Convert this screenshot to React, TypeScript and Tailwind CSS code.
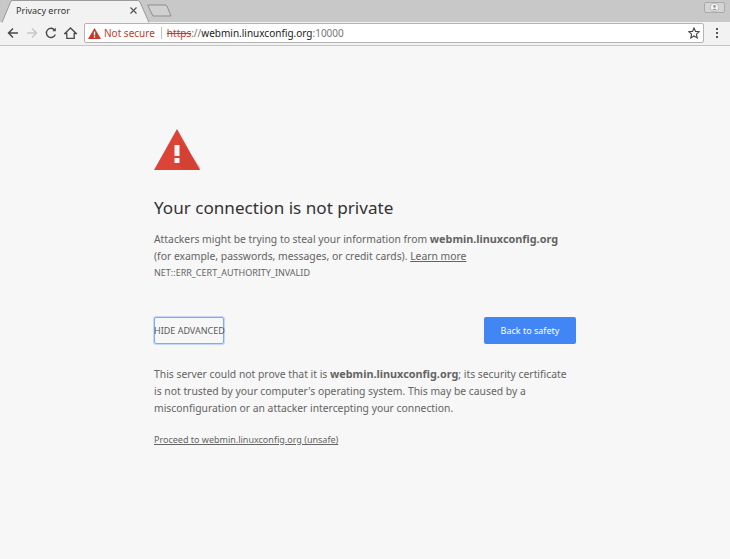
const font = { fontFamily: '"Noto Sans", "Open Sans", sans-serif' };

function TabStrip() {
  return (
    <div className="relative h-[22px] bg-[#c8c8c8] shrink-0">
      <svg className="absolute left-0 top-0" width="176" height="23" viewBox="0 0 176 23" fill="none">
        <path d="M2 22.5 L11 1 Q11.5 0.5 13 0.5 H137 Q139 0.5 140 2 L149 22.5" fill="#f2f2f2" stroke="#9a9a9a" />
        <path d="M148 6 Q147 5 148 5 H165 Q166 5 167 6 L171 16 H153 Z" fill="#d0d0d0" stroke="#8e8e8e" />
      </svg>
      <div className="absolute left-[16px] top-[3px] text-[9px] leading-[16px] text-[#333]">Privacy error</div>
      <svg className="absolute left-[130px] top-[7px]" width="7" height="7" viewBox="0 0 7 7" stroke="#555" strokeWidth="1.2">
        <path d="M0.5 0.5 L6.5 6.5 M6.5 0.5 L0.5 6.5" />
      </svg>
      <div className="absolute right-[5px] top-[2px] w-[21px] h-[11px] rounded-[2px] border border-[#aaa] bg-[#d4d4d4] flex items-center justify-center">
        <svg width="9" height="9" viewBox="0 0 10 10">
          <circle cx="5" cy="5" r="4.5" fill="#f4f4f4" stroke="#999" strokeWidth="0.6" />
          <circle cx="5" cy="3.8" r="1.5" fill="#999" />
          <path d="M2.2 8 Q5 4.8 7.8 8 Z" fill="#999" />
        </svg>
      </div>
    </div>
  );
}

function Toolbar() {
  return (
    <div className="h-[22px] pb-[1px] bg-[#f2f2f2] border-b border-[#c4c4c4] flex items-center shrink-0 box-content">
      <div className="w-[84px] flex items-center shrink-0">
        <svg className="ml-[7px]" width="12" height="12" viewBox="0 0 12 12" fill="none" stroke="#4a4a4a" strokeWidth="1.5">
          <path d="M11 6 H1.5 M6 1.5 L1.5 6 L6 10.5" />
        </svg>
        <svg className="ml-[7px]" width="12" height="12" viewBox="0 0 12 12" fill="none" stroke="#c6c6c6" strokeWidth="1.5">
          <path d="M1 6 H10.5 M6 1.5 L10.5 6 L6 10.5" />
        </svg>
        <svg className="ml-[7px]" width="12" height="12" viewBox="0 0 12 12" fill="none" stroke="#4a4a4a" strokeWidth="1.4">
          <path d="M10.3 7.6 A4.6 4.6 0 1 1 9.6 3" />
          <path d="M10.8 0.8 V4.2 H7.4 Z" fill="#4a4a4a" stroke="none" />
        </svg>
        <svg className="ml-[7px]" width="13" height="12" viewBox="0 0 13 12" fill="none" stroke="#4a4a4a" strokeWidth="1.3">
          <path d="M0.8 6.5 L6.5 1 L12.2 6.5 H10.2 V11.3 H2.8 V6.5 Z" />
        </svg>
      </div>
      <div className="w-[620px] h-[20px] bg-white border border-[#b4b4b4] rounded-[2px] flex items-center shrink-0">
        <svg className="ml-[3px]" width="13" height="11" viewBox="0 0 13 11">
          <path d="M6.5 0 L13 11 H0 Z" fill="#c5392c" />
          <rect x="5.8" y="3.6" width="1.4" height="3.8" fill="#fff" />
          <rect x="5.8" y="8.2" width="1.4" height="1.4" fill="#fff" />
        </svg>
        <span className="ml-[3px] text-[10px] leading-[16px] text-[#c5392c]">Not secure</span>
        <div className="ml-[6px] w-px h-[12px] bg-[#c0c0c0]" />
        <div className="ml-[5px] text-[10px] leading-[16px] whitespace-nowrap">
          <span className="text-[#c5392c] line-through">https</span>
          <span className="text-[#777]">://</span>
          <span className="text-[#222]">webmin.linuxconfig.org</span>
          <span className="text-[#777]">:10000</span>
        </div>
        <svg className="ml-auto mr-[3px]" width="12" height="12" viewBox="0 0 12 12" fill="none" stroke="#444" strokeWidth="1.1">
          <path d="M6 1 L7.5 4.4 L11.2 4.8 L8.4 7.2 L9.2 10.9 L6 9 L2.8 10.9 L3.6 7.2 L0.8 4.8 L4.5 4.4 Z" />
        </svg>
      </div>
      <div className="ml-[12px] flex flex-col gap-[2px]">
        <div className="w-[2px] h-[2px] bg-[#555]" />
        <div className="w-[2px] h-[2px] bg-[#555]" />
        <div className="w-[2px] h-[2px] bg-[#555]" />
      </div>
    </div>
  );
}

export default function App() {
  return (
    <div className="h-[559px] w-[730px] flex flex-col bg-[#f7f7f7] overflow-hidden" style={font}>
      <TabStrip />
      <Toolbar />
      <main className="ml-[154px] w-[422px] text-[#646464]">
        <svg className="mt-[83px] block" width="46" height="41" viewBox="0 0 46 41">
          <path d="M23 0 L46 41 H0 Z" fill="#db4437" />
          <path d="M26 11 L46 38 V41 H30 L21 32 Z" fill="#c8392c" opacity="0.35" />
          <rect x="20.5" y="16" width="5" height="11" fill="#f7f7f7" />
          <rect x="20.5" y="29" width="5" height="5" fill="#f7f7f7" />
        </svg>
        <h1 className="mt-[26px] text-[17.1px] leading-[24px] font-normal text-[#333]">Your connection is not private</h1>
        <p className="mt-[10px] text-[10.35px] leading-[17px] whitespace-nowrap">
          Attackers might be trying to steal your information from <b className="font-bold text-[10.85px]">webmin.linuxconfig.org</b>
          <br />
          (for example, passwords, messages, or credit cards). <a className="underline">Learn more</a>
        </p>
        <div className="mt-0 text-[9px] leading-[15px]">NET::ERR_CERT_AUTHORITY_INVALID</div>
        <div className="mt-[37px] flex items-center justify-between">
          <button className="w-[70px] h-[27px] bg-[#f7f7f7] border border-[#7fabf5] ring-1 ring-[#c3d8fa] rounded-[2px] text-[9px] leading-none text-left indent-[-1px] whitespace-nowrap text-[#5a5a5a]">
            HIDE ADVANCED
          </button>
          <button className="w-[92px] h-[27px] bg-[#4285f4] rounded-[2px] text-[9px] leading-none text-white">
            Back to safety
          </button>
        </div>
        <p className="mt-[21px] text-[10.35px] leading-[17px] whitespace-nowrap">
          This server could not prove that it is <b className="font-bold text-[10.85px]">webmin.linuxconfig.org</b>; its security certificate
          <br />
          is not trusted by your computer's operating system. This may be caused by a
          <br />
          misconfiguration or an attacker intercepting your connection.
        </p>
        <a className="block mt-[15px] text-[9px] leading-[15px] underline">Proceed to webmin.linuxconfig.org (unsafe)</a>
      </main>
    </div>
  );
}
